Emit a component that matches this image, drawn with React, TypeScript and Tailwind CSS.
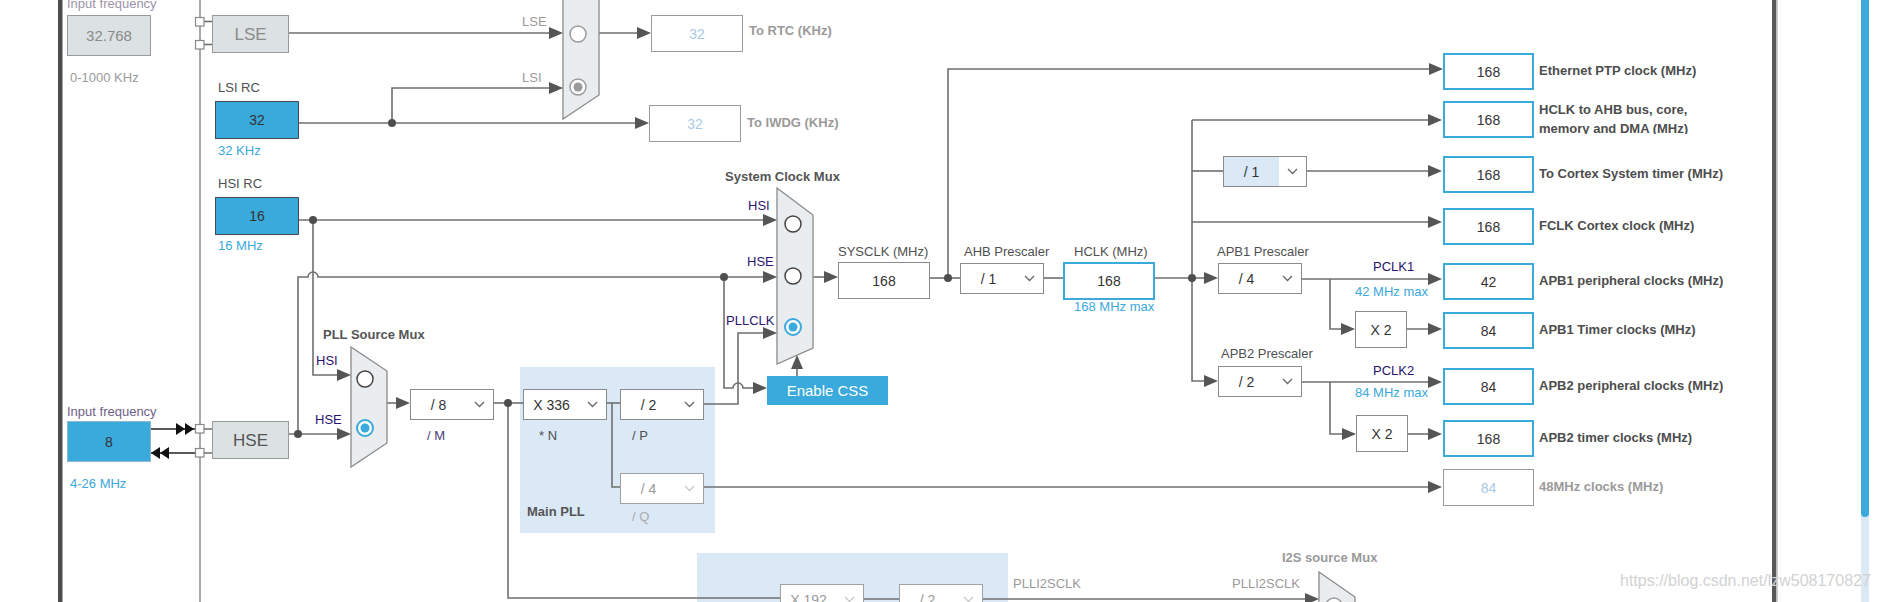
import React from 'react'

const WIRE = '#6f6f6f'
const HEAD = '#555'

// wires of the clock tree, in page pixels
const wires = [
  'M204 21.5 H212', 'M204 44.5 H212',
  'M288 33 H560',
  'M298 123 H646', 'M392 123 V88 H560',
  'M599 33 H648',
  'M298 220 H774', 'M313 220 V375 H348',
  'M288 434 H348',
  'M298 434 V277 H308 A5 5 0 0 1 318 277 H774',
  'M387 403 H407',
  'M493 403 H523', 'M508 403 V598 H780',
  'M606 403 H620', 'M612 403 V487 H620',
  'M703 404 H738 V333 H774',
  'M724 277 V388 H733 A5 5 0 0 1 743 388 H764',
  'M797 376 V360',
  'M703 487 H1439',
  'M813 277 H835',
  'M929 278 H960', 'M948 278 V69 H1440',
  'M1043 278 H1063',
  'M1154 278 H1215',
  'M1192 120 V381 H1215', 'M1192 120 H1439', 'M1192 171 H1223', 'M1306 171 H1439', 'M1192 222 H1439',
  'M1301 279 H1439', 'M1330 279 V329 H1352', 'M1406 329 H1439',
  'M1301 382 H1439', 'M1330 382 V434 H1353', 'M1407 434 H1439',
  'M863 599 H899', 'M982 599 H1316',
]

const arrows: [number, number][] = [
  [563, 33], [649, 123], [563, 88], [651, 33], [777, 220], [351, 375], [351, 434], [777, 277],
  [410, 403], [777, 333], [767, 388], [838, 277], [1443, 69], [1218, 278], [1218, 381],
  [1442, 120], [1442, 171], [1442, 222], [1442, 279], [1355, 329], [1442, 329], [1442, 382],
  [1356, 434], [1442, 434], [1442, 487], [1319, 599],
]

const dots: [number, number][] = [
  [392, 123], [313, 220], [298, 434], [724, 277], [508, 403], [948, 278], [1192, 278],
]

const dark = 'text-[13px] text-[#505050]'
const navy = 'text-[13px] text-[#2b1470]'
const blue = 'text-[13px] text-[#3aa9dc]'
const grey = 'text-[13px] text-[#9a9a9a]'
const boldDark = 'text-[13px] font-bold text-[#555]'
const boldGrey = 'text-[13px] font-bold text-[#9a9a9a]'

const labels = [
  { x: 67, y: 3, t: 'Input frequency', c: 'text-[13px] text-[#9d92a9]' },
  { x: 70, y: 77, t: '0-1000 KHz', c: grey },
  { x: 218, y: 87, t: 'LSI RC', c: dark },
  { x: 218, y: 150, t: '32 KHz', c: blue },
  { x: 218, y: 183, t: 'HSI RC', c: dark },
  { x: 218, y: 245, t: '16 MHz', c: blue },
  { x: 67, y: 411, t: 'Input frequency', c: 'text-[13px] text-[#6f6088]' },
  { x: 70, y: 483, t: '4-26 MHz', c: blue },
  { x: 522, y: 21, t: 'LSE', c: grey },
  { x: 522, y: 77, t: 'LSI', c: grey },
  { x: 749, y: 30, t: 'To RTC (KHz)', c: boldGrey },
  { x: 747, y: 122, t: 'To IWDG (KHz)', c: boldGrey },
  { x: 725, y: 176, t: 'System Clock Mux', c: boldDark },
  { x: 748, y: 205, t: 'HSI', c: navy },
  { x: 747, y: 261, t: 'HSE', c: navy },
  { x: 726, y: 320, t: 'PLLCLK', c: navy },
  { x: 323, y: 334, t: 'PLL Source Mux', c: boldDark },
  { x: 316, y: 360, t: 'HSI', c: navy },
  { x: 315, y: 419, t: 'HSE', c: navy },
  { x: 427, y: 435, t: '/ M', c: 'text-[13px] text-[#4b3b7b]' },
  { x: 539, y: 435, t: '* N', c: dark },
  { x: 632, y: 435, t: '/ P', c: dark },
  { x: 632, y: 516, t: '/ Q', c: 'text-[13px] text-[#aaa]' },
  { x: 527, y: 511, t: 'Main PLL', c: boldDark },
  { x: 838, y: 251, t: 'SYSCLK (MHz)', c: dark },
  { x: 964, y: 251, t: 'AHB Prescaler', c: dark },
  { x: 1074, y: 251, t: 'HCLK (MHz)', c: dark },
  { x: 1074, y: 306, t: '168 MHz max', c: blue },
  { x: 1217, y: 251, t: 'APB1 Prescaler', c: dark },
  { x: 1373, y: 266, t: 'PCLK1', c: navy },
  { x: 1355, y: 291, t: '42 MHz max', c: blue },
  { x: 1221, y: 353, t: 'APB2 Prescaler', c: dark },
  { x: 1373, y: 370, t: 'PCLK2', c: navy },
  { x: 1355, y: 392, t: '84 MHz max', c: blue },
  { x: 1013, y: 583, t: 'PLLI2SCLK', c: grey },
  { x: 1232, y: 583, t: 'PLLI2SCLK', c: grey },
  { x: 1282, y: 557, t: 'I2S source Mux', c: boldGrey },
]

const boxKinds: Record<string, string> = {
  grey: 'bg-[#dce1e3] border border-[#9a9a9a] text-[#8a8a8a] text-[15px]',
  greyBig: 'bg-[#dce1e3] border border-[#9a9a9a] text-[#8a8a8a] text-[17px]',
  greyDark: 'bg-[#dce1e3] border border-[#9a9a9a] text-[#555] text-[17px]',
  fill: 'bg-[#3aa9dc] border border-[#4a4a4a] text-[#333] text-[14px]',
  input: 'bg-[#3aa9dc] border border-[#8fb8cf] text-[#333] text-[14px]',
  off: 'bg-white border border-[#9a9a9a] text-[#a9c9e6] text-[14px]',
  plain: 'bg-white border border-[#8a8a8a] text-[#333] text-[14px]',
  out: 'bg-white border-2 border-[#3aa9dc] text-[#333] text-[14px]',
}

const boxes = [
  { x: 67, y: 15, w: 84, h: 41, t: '32.768', k: 'grey' },
  { x: 212, y: 15, w: 77, h: 38, t: 'LSE', k: 'greyBig' },
  { x: 215, y: 101, w: 84, h: 38, t: '32', k: 'fill' },
  { x: 215, y: 197, w: 84, h: 38, t: '16', k: 'fill' },
  { x: 67, y: 421, w: 84, h: 41, t: '8', k: 'input' },
  { x: 212, y: 421, w: 77, h: 38, t: 'HSE', k: 'greyDark' },
  { x: 651, y: 15, w: 92, h: 37, t: '32', k: 'off' },
  { x: 649, y: 105, w: 92, h: 37, t: '32', k: 'off' },
  { x: 838, y: 262, w: 92, h: 37, t: '168', k: 'plain' },
  { x: 1063, y: 262, w: 92, h: 38, t: '168', k: 'out' },
  { x: 1355, y: 311, w: 52, h: 37, t: 'X 2', k: 'plain' },
  { x: 1356, y: 415, w: 52, h: 37, t: 'X 2', k: 'plain' },
]

const selects = [
  { x: 410, y: 389, t: '/ 8' },
  { x: 523, y: 389, t: 'X 336' },
  { x: 620, y: 389, t: '/ 2' },
  { x: 620, y: 473, t: '/ 4', dim: true },
  { x: 960, y: 263, t: '/ 1' },
  { x: 1223, y: 156, t: '/ 1', hi: true },
  { x: 1218, y: 263, t: '/ 4' },
  { x: 1218, y: 366, t: '/ 2' },
  { x: 780, y: 584, t: 'X 192', dim: true },
  { x: 899, y: 584, t: '/ 2', dim: true },
]

const outputs = [
  { y: 53, v: '168', l: ['Ethernet PTP clock (MHz)'] },
  { y: 101, v: '168', l: ['HCLK to AHB bus, core,', 'memory and DMA (MHz)'] },
  { y: 156, v: '168', l: ['To Cortex System timer (MHz)'] },
  { y: 208, v: '168', l: ['FCLK Cortex clock (MHz)'] },
  { y: 263, v: '42', l: ['APB1 peripheral clocks (MHz)'] },
  { y: 312, v: '84', l: ['APB1 Timer clocks (MHz)'] },
  { y: 368, v: '84', l: ['APB2 peripheral clocks (MHz)'] },
  { y: 420, v: '168', l: ['APB2 timer clocks (MHz)'] },
  { y: 469, v: '84', l: ['48MHz clocks (MHz)'], off: true },
]

function Radio({ cx, cy, on, tone }: { cx: number; cy: number; on?: boolean; tone?: 'grey' }) {
  const c = tone === 'grey' ? '#9a9a9a' : on ? '#3aa9dc' : '#444'
  return (
    <g>
      <circle cx={cx} cy={cy} r={8} fill="white" stroke={c} strokeWidth={on ? 2 : 1.5} />
      {on && <circle cx={cx} cy={cy} r={4.5} fill={c} />}
    </g>
  )
}

function Chevron({ color }: { color: string }) {
  return (
    <svg width="11" height="7" viewBox="0 0 11 7">
      <polyline points="1,1 5.5,5.5 10,1" fill="none" stroke={color} strokeWidth="1.3" />
    </svg>
  )
}

export default function App() {
  return (
    <div className="relative w-[1879px] h-[602px] overflow-hidden bg-white font-['Liberation_Sans',Arial,sans-serif]">
      {/* pll panels */}
      <div className="absolute left-[520px] top-[367px] w-[195px] h-[166px] bg-[#dbe8f5]" />
      <div className="absolute left-[697px] top-[553px] w-[311px] h-[60px] bg-[#dbe8f5]" />

      <svg className="absolute inset-0" width="1879" height="602">
        {/* frame lines */}
        <rect x="58" y="0" width="4.5" height="602" fill="#4d4d4d" />
        <line x1="200" y1="0" x2="200" y2="602" stroke="#8a8a8a" strokeWidth="1.5" />
        <rect x="1772" y="0" width="4.5" height="602" fill="#585858" />
        <rect x="1776.5" y="0" width="1.5" height="602" fill="#cfcfcf" />

        {wires.map((d, i) => (
          <path key={i} d={d} fill="none" stroke={WIRE} strokeWidth="1.6" />
        ))}

        {/* input pins */}
        <rect x="195.5" y="17.5" width="8.5" height="8.5" fill="white" stroke="#888" strokeWidth="1.2" />
        <rect x="195.5" y="40.5" width="8.5" height="8.5" fill="white" stroke="#888" strokeWidth="1.2" />
        <path d="M151 429 H196 M151 453 H196" stroke="#222" strokeWidth="1.6" />
        <path d="M204 429 H212 M204 453 H212" stroke={WIRE} strokeWidth="1.6" />
        <polygon points="176,423 185,429 176,435" fill="#111" />
        <polygon points="185,423 194,429 185,435" fill="#111" />
        <polygon points="160,447 151,453 160,459" fill="#111" />
        <polygon points="169,447 160,453 169,459" fill="#111" />
        <rect x="195.5" y="424.5" width="8.5" height="8.5" fill="white" stroke="#888" strokeWidth="1.2" />
        <rect x="195.5" y="448.5" width="8.5" height="8.5" fill="white" stroke="#888" strokeWidth="1.2" />

        {/* muxes */}
        <polygon points="563,-40 599,-16 599,95 563,119" fill="#e9edf0" stroke="#8a8a8a" strokeWidth="1.3" />
        <Radio cx={578} cy={34} tone="grey" />
        <circle cx={578} cy={87} r={8} fill="white" stroke="#9a9a9a" strokeWidth="1.5" />
        <circle cx={578} cy={87} r={4.5} fill="#9a9a9a" />

        <polygon points="351,347 387,371 387,443 351,467" fill="#e9edf0" stroke="#8a8a8a" strokeWidth="1.3" />
        <Radio cx={365} cy={379} />
        <Radio cx={365} cy={428} on />

        <polygon points="777,188 813,215 813,348 777,364" fill="#e9edf0" stroke="#8a8a8a" strokeWidth="1.3" />
        <Radio cx={793} cy={224} />
        <Radio cx={793} cy={276} />
        <Radio cx={793} cy={327} on />

        <polygon points="1319,572 1355,597 1355,640 1319,660" fill="#e9edf0" stroke="#8a8a8a" strokeWidth="1.3" />
        <circle cx={1334} cy={606} r={8} fill="white" stroke="#9a9a9a" strokeWidth="1.5" />

        {arrows.map(([x, y], i) => (
          <polygon key={i} points={`${x - 14},${y - 6} ${x},${y} ${x - 14},${y + 6}`} fill={HEAD} />
        ))}
        <polygon points="791,369 797,355 803,369" fill={HEAD} />

        {dots.map(([x, y], i) => (
          <circle key={i} cx={x} cy={y} r={4} fill="#4d4d4d" />
        ))}
      </svg>

      {boxes.map((b, i) => (
        <div
          key={i}
          className={`absolute flex items-center justify-center leading-none ${boxKinds[b.k]}`}
          style={{ left: b.x, top: b.y, width: b.w, height: b.h }}
        >
          {b.t}
        </div>
      ))}

      {selects.map((s, i) => (
        <div
          key={i}
          className={`absolute flex w-[84px] h-[31px] border bg-white leading-none text-[14px] ${s.dim ? 'border-[#a0a0a0] text-[#9a9a9a]' : 'border-[#8a8a8a] text-[#333]'}`}
          style={{ left: s.x, top: s.y }}
        >
          <div className={`w-[55px] flex items-center justify-center ${s.hi ? 'bg-[#dbe8f5]' : ''}`}>{s.t}</div>
          <div className="flex-1 flex items-center justify-center">
            <Chevron color={s.dim ? '#c8c8c8' : '#666'} />
          </div>
        </div>
      ))}

      <div className="absolute left-[767px] top-[376px] w-[121px] h-[29px] bg-[#3aa9dc] text-white text-[15px] flex items-center justify-center leading-none">
        Enable CSS
      </div>

      {/* output clocks: value box followed by its caption */}
      {outputs.map((o, i) => (
        <div key={i} className="absolute left-[1443px] flex items-center gap-[5px]" style={{ top: o.y }}>
          <div
            className={`w-[91px] h-[37px] flex items-center justify-center bg-white text-[14px] leading-none ${o.off ? 'border border-[#9a9a9a] text-[#a9c9e6]' : 'border-2 border-[#3aa9dc] text-[#333]'}`}
          >
            {o.v}
          </div>
          <div
            className={`h-[34px] overflow-hidden whitespace-nowrap text-[13px] font-bold ${o.off ? 'text-[#9a9a9a]' : 'text-[#4d4d4d]'} ${o.l.length > 1 ? 'leading-[19px] -mt-[5px]' : 'flex items-center leading-none -mt-[2px]'}`}
          >
            {o.l.map((line, j) => (
              <div key={j}>{line}</div>
            ))}
          </div>
        </div>
      ))}

      {labels.map((l, i) => (
        <div
          key={i}
          className={`absolute h-[18px] flex items-center whitespace-nowrap leading-none ${l.c}`}
          style={{ left: l.x, top: l.y - 9 }}
        >
          {l.t}
        </div>
      ))}

      {/* scrollbar */}
      <div className="absolute left-[1861px] top-0 w-[8px] h-[602px] bg-[#dbe8f5]">
        <div className="h-[517px] rounded-b-[4px] bg-[#3aa9dc]" />
      </div>

      <div className="absolute left-[1620px] top-[573px] text-[16px] leading-none text-[#d2d2d2] whitespace-nowrap">
        https://blog.csdn.net/lzw508170827
      </div>
    </div>
  )
}
